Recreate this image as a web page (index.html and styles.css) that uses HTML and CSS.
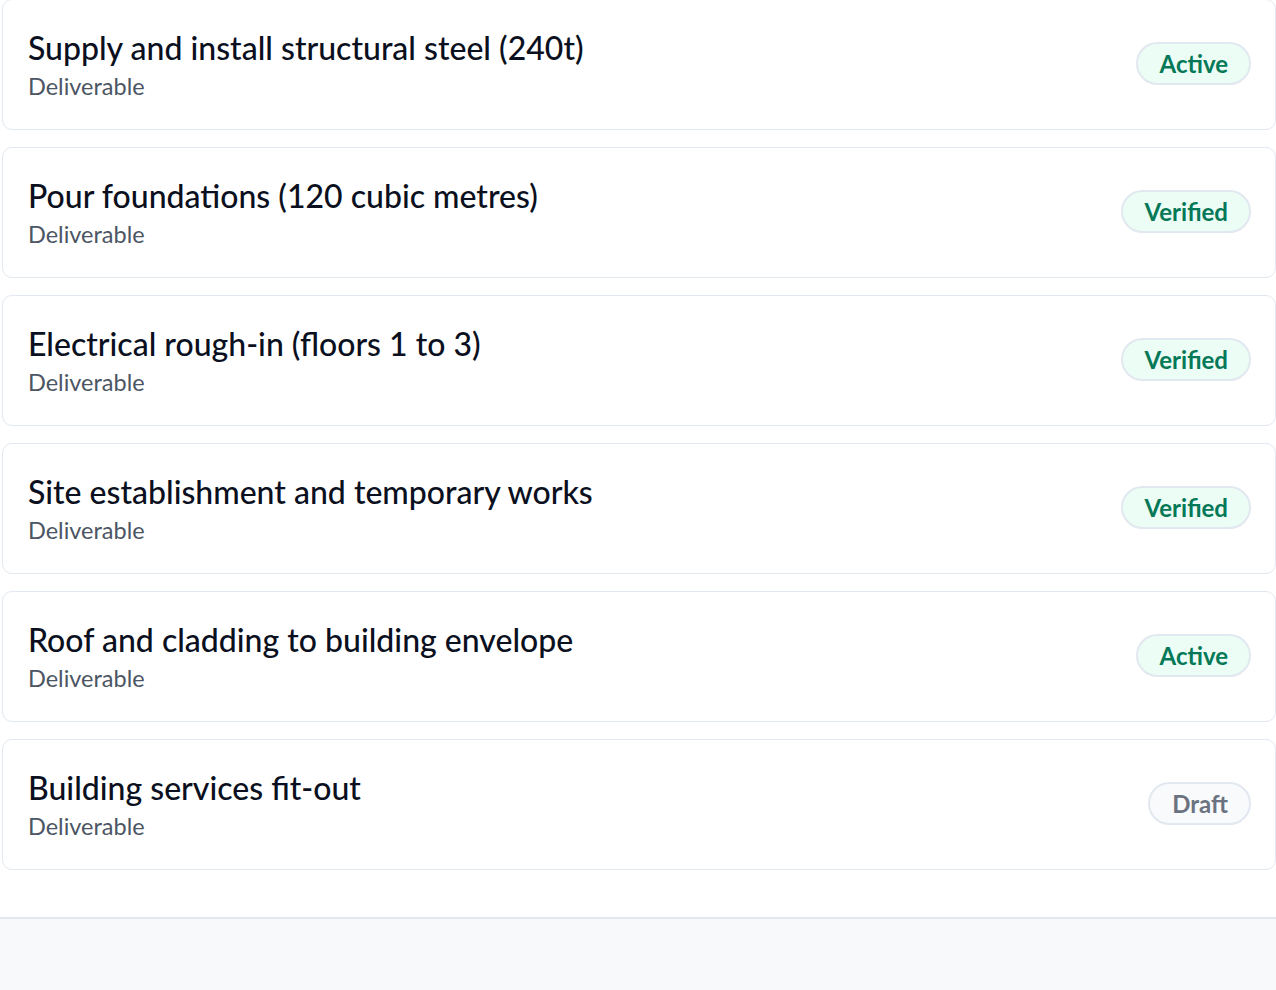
FILE: index.html
```html
<!DOCTYPE html>
<html lang="en">
<head>
<meta charset="utf-8">
<title>Deliverables</title>
<link rel="stylesheet" href="styles.css">
</head>
<body>
<main class="page">
  <ul class="list">
    <li class="card">
      <div class="info">
        <div class="title">Supply and install structural steel (240t)</div>
        <div class="sub">Deliverable</div>
      </div>
      <span class="badge badge-active">Active</span>
    </li>
    <li class="card">
      <div class="info">
        <div class="title">Pour foundations (120 cubic metres)</div>
        <div class="sub">Deliverable</div>
      </div>
      <span class="badge badge-verified">Verified</span>
    </li>
    <li class="card">
      <div class="info">
        <div class="title">Electrical rough-in (floors 1 to 3)</div>
        <div class="sub">Deliverable</div>
      </div>
      <span class="badge badge-verified">Verified</span>
    </li>
    <li class="card">
      <div class="info">
        <div class="title">Site establishment and temporary works</div>
        <div class="sub">Deliverable</div>
      </div>
      <span class="badge badge-verified">Verified</span>
    </li>
    <li class="card">
      <div class="info">
        <div class="title">Roof and cladding to building envelope</div>
        <div class="sub">Deliverable</div>
      </div>
      <span class="badge badge-active">Active</span>
    </li>
    <li class="card">
      <div class="info">
        <div class="title">Building services fit-out</div>
        <div class="sub">Deliverable</div>
      </div>
      <span class="badge badge-draft">Draft</span>
    </li>
  </ul>
</main>
<footer class="footer"></footer>
</body>
</html>
```
FILE: styles.css
```css
html, body {
  margin: 0;
  padding: 0;
  background: #ffffff;
}
body {
  font-family: Lato, "Noto Sans", sans-serif;
  color: #0b1020;
  min-height: 990px;
  display: flex;
  flex-direction: column;
}
.page {
  padding: 0 0 47px 2px;
}
.list {
  list-style: none;
  margin: -1px 0 0 0;
  padding: 0;
  display: flex;
  flex-direction: column;
  gap: 17px;
}
.card {
  box-sizing: border-box;
  height: 131px;
  border: 1px solid #e2e8f0;
  border-radius: 10px;
  background: #ffffff;
  display: flex;
  align-items: center;
  justify-content: space-between;
  padding: 0 24px 0 25px;
}
.info {
  display: flex;
  flex-direction: column;
}
.title {
  font-size: 32px;
  font-weight: 500;
  line-height: 40px;
  color: #0b1020;
}
.sub {
  font-size: 23.5px;
  line-height: 32px;
  color: #4b5563;
  margin-top: 2px;
}
.badge {
  box-sizing: border-box;
  height: 43px;
  border-radius: 22px;
  border: 2px solid #e2e8f0;
  padding: 0 21px 0 22px;
  margin-top: -2px;
  display: inline-flex;
  align-items: center;
  font-size: 24px;
  font-weight: 700;
}
.badge-active, .badge-verified {
  background: #ecfdf5;
  color: #047857;
}
.badge-draft {
  background: #f8fafc;
  color: #6b7280;
}
.footer {
  flex: 1;
  border-top: 2px solid #e2e8f0;
  background: #f8f9fb;
}
```
